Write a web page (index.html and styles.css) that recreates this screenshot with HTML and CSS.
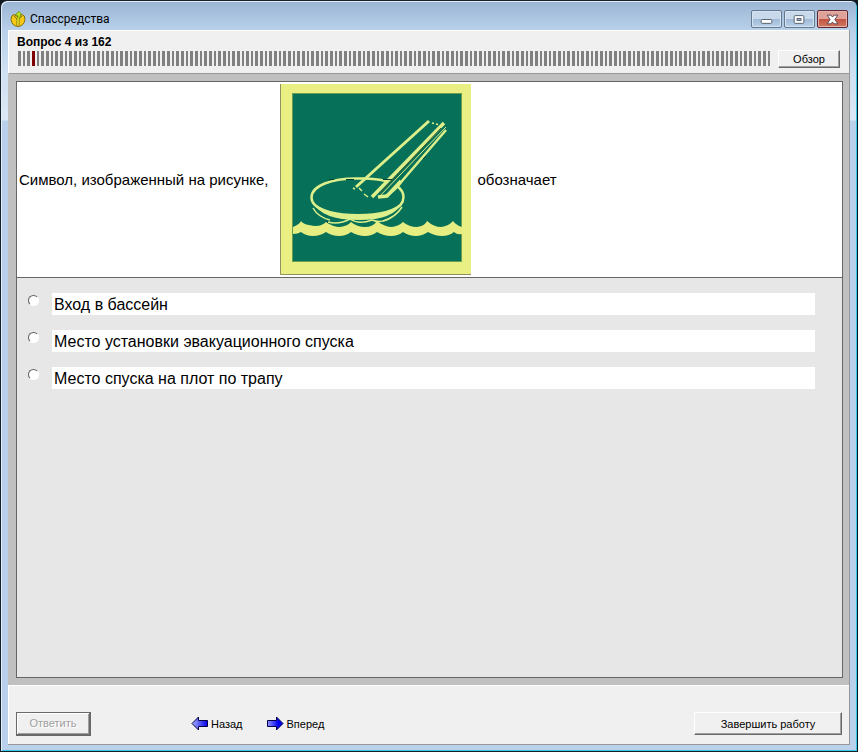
FILE: index.html
```html
<!DOCTYPE html>
<html lang="ru">
<head>
<meta charset="utf-8">
<title>Спассредства</title>
<link rel="stylesheet" href="styles.css">
</head>
<body>
<div class="window">
  <header class="titlebar">
    <svg class="app-icon" viewBox="0 0 16 16" aria-hidden="true">
      <path d="M4 3.500Q1 4 1 8.500Q2 15 8 15.500Q14 15 15 8.500Q15 4 12 3.500L8 6Z" fill="#f5c915" stroke="#84700c"/>
      <path d="M4 5L7 8V14.500M12 5L9 8V14.500" fill="none" stroke="#806c12"/>
      <path d="M5.500 3.500L9 .5L11 2.500L10 7L7.500 8L8 5Z" fill="#b9e51c" stroke="#718600" stroke-width=".8"/>
      <path d="M8 7V14" stroke="#d5dd2a" stroke-width="1.500"/>
    </svg>
    <h1 class="title">Спассредства</h1>
    <div class="window-controls">
      <button class="control" type="button" aria-label="Свернуть"><svg viewBox="0 0 30 16"><rect x="9.500" y="8.500" width="11" height="4" rx="1" fill="#fff" stroke="#56606e"/></svg></button>
      <button class="control" type="button" aria-label="Развернуть"><svg viewBox="0 0 30 16"><rect x="9.500" y="4.500" width="10" height="8" rx="1" fill="#fff" stroke="#56606e"/><rect x="12.500" y="7.500" width="4" height="2" fill="#9bb5d3" stroke="#56606e"/></svg></button>
      <button class="control close" type="button" aria-label="Закрыть"><svg viewBox="0 0 30 16"><path d="M9.500 4H13.500L15 6L16.500 4H20.500L17.500 8.500L20.500 13H16.500L15 11L13.500 13H9.500L12.500 8.500Z" fill="#fff" stroke="#594652"/></svg></button>
    </div>
  </header>
  <main class="client">
    <section class="progress">
      <div class="counter">Вопрос 4 из 162</div>
      <div class="progress-row">
        <div class="segments" id="segments"></div>
        <button class="button review" type="button">Обзор</button>
      </div>
    </section>
    <section class="workspace">
      <form class="test" id="test">
        <div class="question">
          <span class="lead">Символ, изображенный на рисунке,</span>
          <svg class="sign" viewBox="5 4 191 191" role="img" aria-label="Знак">
            <rect x="5" y="4" width="191" height="191" fill="#e9ef83"/>
            <path d="M5.500 4V194.500H196" fill="none" stroke="#8d925f"/>
            <rect x="17.500" y="13.500" width="169" height="168" fill="#067158" stroke="#6b9d50"/>
            <g fill="none" stroke="#dcef8b">
              <path d="M84 98.500C56 98 36.500 106 36.500 117.500C36.500 129 57 136 84 136C111 136 128.500 129 128.500 117C128.500 112 126 109 122 106M84 98.500Q100 98 111 101" stroke-width="2.500"/>
              <path fill="#dcef8b" stroke="none" d="M38 122Q50 134 83 134Q116 134 127 122Q120 140 84 140Q46 140 38 122Z"/>
              <path d="M38 128Q43 137 55 140M127 127Q121 137 108 141" stroke-width="1.500"/>
              <path d="M53 142Q64 145 75 139Q84 145 97 140Q107 144 117 137" stroke-width="1.500"/>
              <path d="M81 107L154 41" stroke-width="3"/>
              <path d="M97 117L169 43" stroke-width="3.500"/>
              <path d="M103 118L171 47" stroke-width="1"/>
              <path d="M109 117Q119 112 127 101L171 50" stroke-width="2.500"/>
              <path d="M103 117L112 116L126 101" stroke-width="3.500"/>
              <path d="M78 108l2 1M84 108l3 3M89 114l4 3M157 43l2 .5M161 44l2 .5" stroke-width="1.500"/>
            </g>
            <path d="M54 99.500h5M71 99.500h8M108 99.500h10M148 79l3-3M52 141l1 3" stroke="#033f33"/>
            <path d="M105 113L134 82L166 48" fill="none" stroke="#425b2b"/>
            <path fill="#e6ee82" d="M18 147Q25 144 26 141Q28 144 34 145Q45 148 51 142Q58 147 65 147Q73 146 76 142Q82 147 90 147Q98 147 102 141Q110 147 117 147Q124 146 128 142Q134 147 142 147Q150 146 152 141Q159 147 166 147Q174 146 178 141Q181 145 187 147V154Q182 155 179 152Q174 156 167 156Q160 156 153 152Q147 156 141 156Q134 156 128 152Q123 156 116 156Q109 156 102 152Q97 156 90 156Q83 156 76 152Q71 156 64 156Q57 156 51 152Q45 156 38 156Q31 156 26 152Q23 154 18 154Z"/>
          </svg>
          <span>обозначает</span>
        </div>
        <div class="answers">
          <label class="answer"><input type="radio" name="answer"><span>Вход в бассейн</span></label>
          <label class="answer"><input type="radio" name="answer"><span>Место установки эвакуационного спуска</span></label>
          <label class="answer"><input type="radio" name="answer"><span>Место спуска на плот по трапу</span></label>
        </div>
      </form>
    </section>
    <footer class="actions">
      <button class="button submit" type="submit" form="test" disabled>Ответить</button>
      <nav class="navigation">
        <button class="nav-button" type="button"><svg viewBox="0 0 17 15"><defs><linearGradient id="blue-left"><stop stop-color="#a9b0ff"/><stop offset="1" stop-color="#0000e8"/></linearGradient></defs><path d="M1 7.500L7.500 1V4.500H16.500V10.500H7.500V14Z" fill="url(#blue-left)" stroke="#000044"/></svg>Назад</button>
        <button class="nav-button" type="button"><svg viewBox="0 0 17 15"><defs><linearGradient id="blue-right"><stop stop-color="#9292ff"/><stop offset=".7" stop-color="#0000f0"/></linearGradient></defs><path d="M.5 4.500H9.500V1L16 7.500L9.500 14V10.500H.5Z" fill="url(#blue-right)" stroke="#000044"/></svg>Вперед</button>
      </nav>
      <button class="button finish" type="button">Завершить работу</button>
    </footer>
  </main>
</div>
<script src="script.js"></script>
</body>
</html>
```

FILE: styles.css
```css
* { box-sizing: border-box; }
html, body { height: 100%; }
body {
  margin: 0;
  background: #101820;
  color: #000;
  font: 11px/14px "Liberation Sans", Arial, sans-serif;
}
button { font: inherit; color: inherit; }
.window {
  display: flex;
  flex-direction: column;
  min-height: 100vh;
  padding: 0 6px 6px;
  border: 1px solid #17212b;
  border-right-color: #061820;
  border-radius: 7px 7px 0 0;
  background: linear-gradient(#9ab4d3, #b9d1ea 30px, #cfe0f2 70px, #dce8f5 119px, #b9d1ea 120px);
  box-shadow: inset 1px 1px #e1edf8, inset -1px -1px #35c9e3;
}
.titlebar {
  display: flex;
  align-items: center;
  height: 29px;
  padding: 6px 3px 0 3px;
}
.app-icon { width: 16px; height: 16px; }
.title {
  flex: 1;
  margin: 0 0 0 4px;
  font: 12px/16px Roboto, "Open Sans", sans-serif;
}
.window-controls { display: flex; gap: 2px; }
.control {
  width: 31px;
  height: 18px;
  padding: 0;
  border: 1px solid #66788e;
  border-radius: 2px;
  background: linear-gradient(#c8d9eb 48%, #9fb9d7 50%, #bad1e9);
  box-shadow: inset 0 0 0 1px #d5e4f3;
}
.control svg { display: block; width: 100%; height: 16px; }
.close {
  border-color: #5b2730;
  background: linear-gradient(#dfa299 48%, #c25243 50%, #ce7960);
  box-shadow: inset 0 0 0 1px #e6b3ab;
}
.client {
  flex: 1;
  display: flex;
  flex-direction: column;
  margin: 0 1px;
  border-right: 1px solid #989898;
  border-bottom: 1px solid #989898;
  background: #f0f0f0;
}
.progress {
  height: 44px;
  padding: 4px 9px 0 8px;
  border-top: 1px solid #fff;
  border-left: 1px solid #fff;
  border-bottom: 1px solid #999;
}
.counter { font-weight: 700; font-size: 12px; line-height: 14px; }
.progress-row { display: flex; gap: 7px; }
.segments {
  flex: 1;
  display: flex;
  gap: 2px;
  height: 15px;
  margin: 2px 0 0 1px;
}
.segment { flex: 1; background: #808080; }
.segment.current { background: #800000; }
.button {
  border: 1px solid;
  border-color: #fff #696969 #696969 #fff;
  box-shadow: inset -1px -1px #a0a0a0;
  background: #f0f0f0;
  padding: 0;
}
.review { width: 62px; height: 18px; margin-top: 1px; }
.workspace {
  flex: 1;
  display: flex;
  padding: 7px 6px 7px 8px;
  background: #c0c0c0;
}
.test {
  flex: 1;
  display: flex;
  flex-direction: column;
  border: 1px solid #666;
  background: #e7e7e7;
  font-size: 16px;
  line-height: 20px;
}
.question {
  display: flex;
  align-items: center;
  gap: 6px;
  padding: 2px;
  border-bottom: 1px solid #666;
  background: #fff;
  font-size: 15px;
}
.lead { padding-right: 6px; }
.sign { width: 191px; height: 191px; flex: none; }
.answers {
  display: grid;
  gap: 15px;
  padding: 15px 27px 15px 11px;
}
.answer { display: flex; align-items: flex-start; gap: 13px; }
.answer input {
  appearance: none;
  width: 11px;
  height: 11px;
  margin: 2px 0 0;
  border: 1px solid;
  border-color: #606060 #fff #fff #606060;
  border-radius: 50%;
  background: #fff;
}
.answer input:checked { background: radial-gradient(#000 2px, #fff 3px); }
.answer span { flex: 1; padding: 2px 2px 0; background: #fff; }
.actions {
  display: flex;
  align-items: center;
  height: 59px;
  padding: 17px 7px 0;
  border-top: 1px solid #fff;
  border-left: 1px solid #fff;
}
.submit {
  width: 75px;
  height: 24px;
  border-width: 1px 2px 2px 1px;
  border-color: #696969;
  box-shadow: inset 1px 1px #fff, inset -1px -1px #a0a0a0;
}
.submit:disabled { color: #a0a0a0; text-shadow: 1px 1px #fff; }
.navigation { display: flex; gap: 24px; margin-left: 100px; }
.nav-button {
  display: flex;
  align-items: center;
  gap: 3px;
  padding: 0;
  border: 0;
  background: none;
}
.nav-button svg { width: 17px; height: 15px; }
.finish { width: 148px; height: 23px; margin-left: auto; }
```

FILE: script.js
```js
const total = 162;
const current = 4;
const strip = document.getElementById("segments");
for (let i = 1; i <= total; i++) {
  const segment = document.createElement("span");
  segment.className = i === current ? "segment current" : "segment";
  strip.append(segment);
}
```
